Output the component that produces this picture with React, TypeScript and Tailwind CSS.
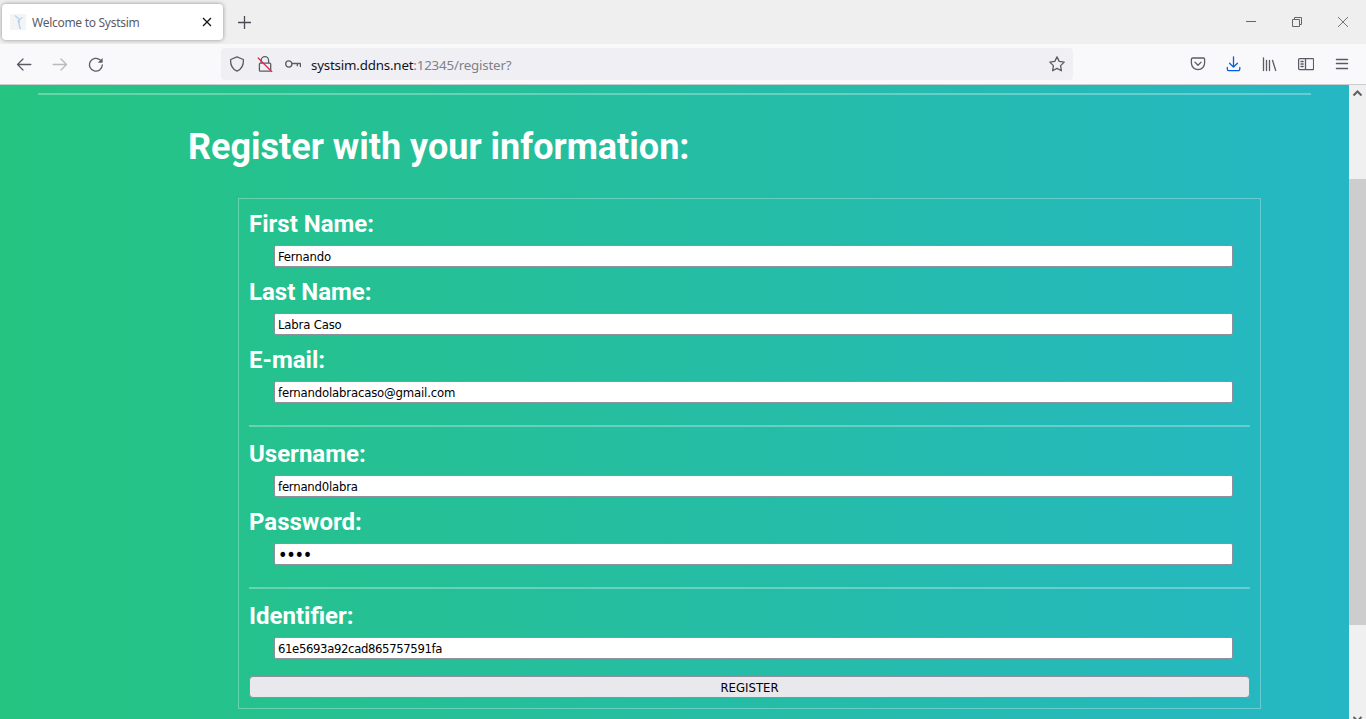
import type { ReactNode } from "react";

function Icon({ children, className = "" }: { children: ReactNode; className?: string }) {
  return (
    <svg
      viewBox="0 0 16 16"
      className={`h-4 w-4 shrink-0 fill-none stroke-current stroke-[1.3] ${className}`}
      strokeLinecap="round"
      strokeLinejoin="round"
    >
      {children}
    </svg>
  );
}

function TabBar() {
  return (
    <div className="flex h-11 items-start bg-[#efefef]">
      <div className="mt-1 ml-0.5 flex h-9 w-[221px] items-center rounded-[4px] bg-white pr-[10px] pl-2 shadow-[0_0_4px_rgba(0,0,0,0.4)]">
        <svg viewBox="0 0 16 16" className="h-4 w-4 shrink-0 bg-[#f4f4f5]">
          <path d="M5 1.5 L9.5 5.5 L12.5 3.5 M9.5 5.5 L9 10 L10.5 15 M8 6 L10 14" fill="none" stroke="#b5d3ee" strokeWidth="1.3" />
        </svg>
        <span className="ml-[6px] flex-1 pt-0.5 text-[12px] leading-4 tracking-[-0.28px] whitespace-nowrap text-[#5b5b66]">
          Welcome to Systsim
        </span>
        <svg viewBox="0 0 12 12" className="h-3 w-3 fill-none stroke-[#15141a] stroke-[1.3]">
          <path d="M2 2l8 8M10 2l-8 8" />
        </svg>
      </div>
      <svg viewBox="0 0 12 12" className="mt-4 ml-[15px] h-[13px] w-[13px] fill-none stroke-[#4b4b55] stroke-[1.2]">
        <path d="M6 0v12M0 6h12" />
      </svg>
      <div className="mt-4 mr-[17px] ml-auto flex gap-[34px] text-[#666]">
        <svg viewBox="0 0 12 12" className="h-3 w-3 fill-none stroke-current">
          <path d="M1 5.5h10" />
        </svg>
        <svg viewBox="0 0 12 12" className="h-3 w-3 fill-none stroke-current">
          <path d="M1.5 3.5h7v7h-7zM3.5 3.5v-2h7v7h-2" />
        </svg>
        <svg viewBox="0 0 12 12" className="h-3 w-3 fill-none stroke-current stroke-[0.9]">
          <path d="M1 1l10 10M11 1L1 11" />
        </svg>
      </div>
    </div>
  );
}

function Toolbar() {
  return (
    <div className="flex h-[41px] items-center border-b border-[#ccccce] bg-[#f9f9fb] text-[#5b5b66]">
      <Icon className="ml-4">
        <path d="M14.8 8.5H1.5M7 3L1.5 8.5L7 14" />
      </Icon>
      <Icon className="ml-5 text-[#b9b9be]">
        <path d="M1.2 8.5h13.3M9 3l5.5 5.5L9 14" />
      </Icon>
      <Icon className="ml-5">
        <path d="M14.3 9A6.4 6.4 0 1 1 12.2 4" />
        <path d="M14.6 2v4.8H9.8z" className="fill-current stroke-none" />
      </Icon>
      <div className="ml-[117px] flex h-8 w-[852px] items-center rounded-[4px] bg-[#f0f0f4] pr-2 pl-2">
        <Icon>
          <path d="M8 .9L14.4 3.5C14.7 8.6 12.2 13.3 8 15.2C3.8 13.3 1.3 8.6 1.6 3.5z" />
        </Icon>
        <Icon className="ml-3">
          <path d="M4.2 7.2V4.4a3.7 3.7 0 0 1 7.4 0v2.8M3.4 7.2h9.3a1 1 0 0 1 1 1v6a1 1 0 0 1-1 1H3.4a1 1 0 0 1-1-1v-6a1 1 0 0 1 1-1z" />
          <path d="M1.2 2L14.8 15.8" className="stroke-[#e22850]" />
        </Icon>
        <Icon className="ml-3">
          <circle cx="3.8" cy="8" r="3.1" />
          <path d="M7 7.5h8.4v3M12.3 7.5v2.3" />
        </Icon>
        <span className="ml-[10px] pt-0.5 text-[13.33px] leading-5 tracking-[-0.19px] whitespace-nowrap text-[#808088]">
          <span className="text-[#15141a]">systsim.ddns.net</span>:12345/register?
        </span>
        <Icon className="ml-auto">
          <path d="M8 .9L10.2 5.4L15.2 6.1L11.6 9.6L12.4 14.8L8 12.4L3.6 14.8L4.4 9.6L.8 6.1L5.8 5.4z" />
        </Icon>
      </div>
      <div className="mr-4 ml-auto flex gap-5">
        <Icon>
          <path d="M2.6 2h10.8a1.2 1.2 0 0 1 1.2 1.2V7a6.6 6.6 0 0 1-13.2 0V3.2A1.2 1.2 0 0 1 2.6 2zM4.9 6.1L8 9.2l3.1-3.1" />
        </Icon>
        <Icon className="text-[#0060df]">
          <path d="M7.5 .8v10M3.6 7.2l3.9 3.9l3.9-3.9M1.3 11.5v1.6a1.6 1.6 0 0 0 1.6 1.6h9.3a1.6 1.6 0 0 0 1.6-1.6v-1.6" />
        </Icon>
        <Icon>
          <path d="M1.5 1.8v12.7M4.5 4.3v10.2M7.5 4.3v10.2M10.5 4.3l3.2 10.2" />
        </Icon>
        <Icon>
          <path d="M1.6 2.6h13a1 1 0 0 1 1 1v9a1 1 0 0 1-1 1h-13a1 1 0 0 1-1-1v-9a1 1 0 0 1 1-1zM7.5 2.6v11M3 5.5h2.2M3 8h2.2M3 10.5h2.2" />
        </Icon>
        <Icon>
          <path d="M2.4 3.5h11.2M2.4 7.5h11.2M2.4 12.5h11.2" />
        </Icon>
      </div>
    </div>
  );
}

function Field({
  label,
  value,
  type = "text",
  textClass = "text-[13px] tracking-[-0.18px]",
}: {
  label: string;
  value: string;
  type?: string;
  textClass?: string;
}) {
  return (
    <label className="mb-[10px] block">
      <span className="block pt-0.5 text-[24px] leading-[27px] font-bold text-white">{label}</span>
      <input
        type={type}
        defaultValue={value}
        className={`mt-[7px] ml-[25px] block h-[22px] w-[959px] rounded-[2px] border border-[#8f8f9d] bg-white px-[3px] pt-px font-[DejaVu_Sans_Condensed,DejaVu_Sans,sans-serif] font-stretch-condensed text-black ${textClass}`}
      />
    </label>
  );
}

function Divider() {
  return <div className="mt-[22px] mb-3 h-0.5 bg-white/30" />;
}

function RegisterPage() {
  return (
    <main className="flex-1 overflow-hidden bg-[linear-gradient(to_right,#25c481,#25b7c4)] font-[Roboto,sans-serif]">
      <div className="mt-2 mr-[38px] ml-[38px] h-0.5 bg-white/30" />
      <h1 className="mt-[31px] ml-[188px] text-[36px] leading-[42px] font-bold text-white">
        Register with your information:
      </h1>
      <form className="mt-[30px] ml-[238px] h-[511px] w-[1023px] border border-white/30 px-[10px] pt-[10px]">
        <Field label="First Name:" value="Fernando" />
        <Field label="Last Name:" value="Labra Caso" />
        <Field label="E-mail:" value="fernandolabracaso@gmail.com" />
        <Divider />
        <Field label="Username:" value="fernand0labra" textClass="text-[13px] tracking-[-0.22px]" />
        <Field label="Password:" value="1234" type="password" textClass="text-[18px] tracking-[-1.3px]" />
        <Divider />
        <Field label="Identifier:" value="61e5693a92cad865757591fa" textClass="text-[13px] tracking-[-0.38px]" />
        <button
          type="button"
          className="mt-[17px] block h-[22px] w-full rounded-[4px] border border-[#8f8f9d] bg-[#e9e9ed] pt-px font-[DejaVu_Sans_Condensed,DejaVu_Sans,sans-serif] text-[13px] leading-[19px] font-stretch-condensed text-black"
        >
          REGISTER
        </button>
      </form>
    </main>
  );
}

function Scrollbar() {
  return (
    <div className="flex w-[17px] flex-col items-center overflow-hidden bg-[#f0f0f0]">
      <svg viewBox="0 0 17 17" className="h-[17px] w-[17px] shrink-0 fill-none stroke-[#606060] stroke-2">
        <path d="M4.5 10.5l4-4l4 4" />
      </svg>
      <div className="mt-[77px] h-[446px] w-full shrink-0 bg-[#cdcdcd]" />
      <svg viewBox="0 0 17 17" className="mt-[86px] h-[17px] w-[17px] shrink-0 fill-none stroke-[#606060] stroke-2">
        <path d="M4.5 6l4 4l4-4" />
      </svg>
    </div>
  );
}

export default function App() {
  return (
    <div className="flex h-[719px] w-[1366px] flex-col overflow-hidden font-[Noto_Sans,sans-serif]">
      <TabBar />
      <Toolbar />
      <div className="flex min-h-0 flex-1">
        <RegisterPage />
        <Scrollbar />
      </div>
    </div>
  );
}
